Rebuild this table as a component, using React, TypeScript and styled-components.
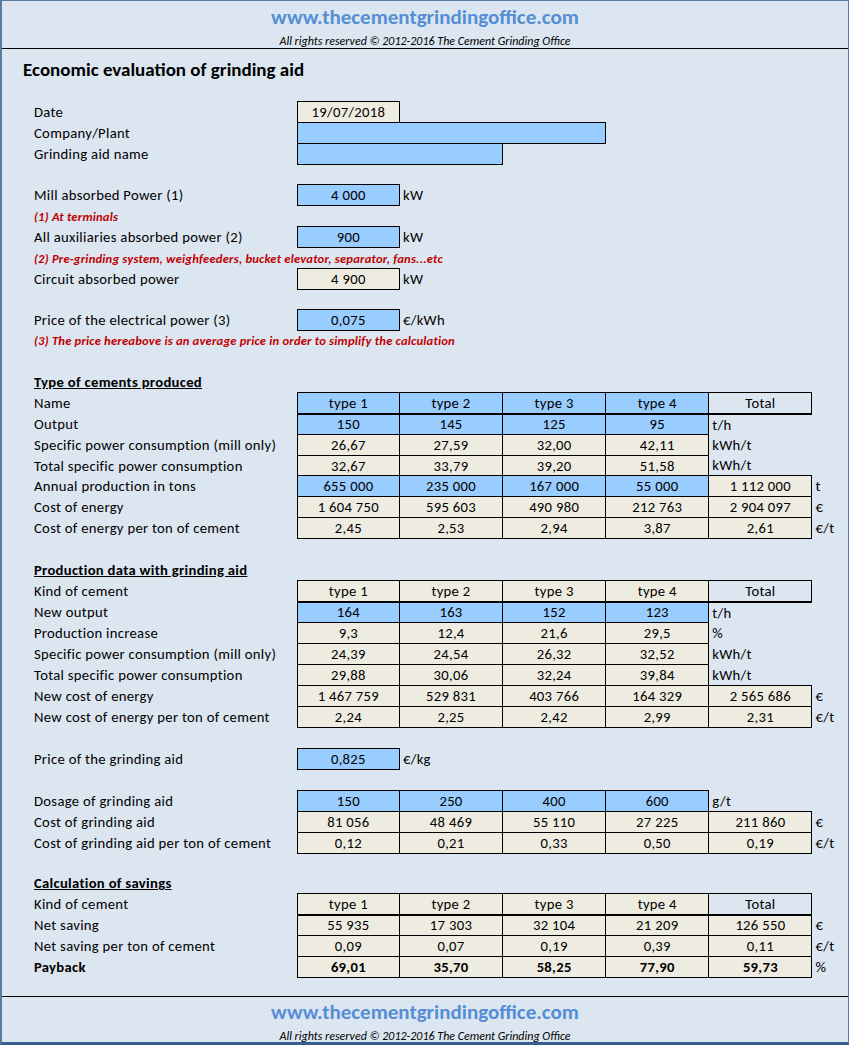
import React from "react";
import styled, { createGlobalStyle, css } from "styled-components";

const FONT = `Carlito, Calibri, Lato, "Liberation Sans", sans-serif`;

const GlobalStyle = createGlobalStyle`
  html, body { margin: 0; padding: 0; background: #dce6f1; }
  body { font-family: ${FONT}; color: #000; }
`;

const Frame = styled.div`
  box-sizing: border-box;
  width: 849px;
  height: 1045px;
  background: #dce6f1;
  border-top: 1px solid #5b7ba3;
  border-left: 2px solid #5b7ba3;
  border-right: 1px solid #5b7ba3;
  border-bottom: 3px solid #376091;
  display: flex;
  flex-direction: column;
`;

const Banner = styled.div<{ $top?: boolean }>`
  box-sizing: border-box;
  height: ${(p) => (p.$top ? "48px" : "46px")};
  display: flex;
  flex-direction: column;
  align-items: center;
  padding-top: ${(p) => (p.$top ? "3px" : "2px")};
  ${(p) =>
    p.$top
      ? css`border-bottom: 1px solid #000;`
      : css`border-top: 1px solid #000; margin-top: auto;`}
`;

const SiteLink = styled.div`
  font-size: 21px;
  line-height: 26px;
  font-weight: 700;
  color: #558ed5;
`;

const Copyright = styled.div`
  margin-top: 4px;
  font-size: 12px;
  line-height: 14px;
  font-style: italic;
  color: #000;
`;

const Title = styled.h1`
  margin: 9px 0 0 21px;
  font-size: 19px;
  line-height: 24px;
  font-weight: 700;
`;

const Sheet = styled.table`
  margin: 19px 0 0 30px;
  border-collapse: collapse;
  table-layout: fixed;
  font-size: 14.67px;
  letter-spacing: 0.3px;
`;

const Row = styled.tr<{ $h: number }>`
  height: ${(p) => p.$h}px;
`;

const Label = styled.td<{ $bold?: boolean }>`
  padding: 0 0 0 2px;
  white-space: nowrap;
  font-weight: ${(p) => (p.$bold ? 700 : 400)};
`;

const FILLS: Record<string, string> = {
  blue: "#99ccff",
  tan: "#eeece1",
  pale: "#dce6f1",
};

const Value = styled.td<{ $fill: string; $bold?: boolean; $thick?: boolean }>`
  padding: 0;
  text-align: center;
  white-space: nowrap;
  background: ${(p) => FILLS[p.$fill]};
  border: 1px solid #000;
  ${(p) => p.$thick && css`border-bottom: 2px solid #000;`}
  font-weight: ${(p) => (p.$bold ? 700 : 400)};
`;

const Unit = styled.td`
  padding: 0 0 0 3px;
  white-space: nowrap;
`;

const Note = styled.td`
  padding: 0 0 0 2px;
  white-space: nowrap;
  color: #c00000;
  font-weight: 700;
  font-style: italic;
  font-size: 12.6px;
  letter-spacing: 0.2px;
`;

const Heading = styled.td`
  padding: 0 0 0 2px;
  white-space: nowrap;
  font-weight: 700;
  text-decoration: underline;
`;

type Cell = { v?: string; fill: "blue" | "tan" | "pale"; span?: number };
type Spec =
  | { kind: "blank"; h?: number }
  | { kind: "heading"; text: string; h?: number }
  | { kind: "note"; text: string; h?: number }
  | {
      kind: "data";
      label: string;
      cells: Cell[];
      unit?: string;
      header?: boolean;
      bold?: boolean;
      h?: number;
    };

const tan = (...vals: string[]): Cell[] => vals.map((v) => ({ v, fill: "tan" }));
const blue = (...vals: string[]): Cell[] => vals.map((v) => ({ v, fill: "blue" }));
const types = ["type 1", "type 2", "type 3", "type 4"];

const rows: Spec[] = [
  { kind: "data", label: "Date", cells: tan("19/07/2018") },
  { kind: "data", label: "Company/Plant", cells: [{ v: "", fill: "blue", span: 3 }] },
  { kind: "data", label: "Grinding aid name", cells: [{ v: "", fill: "blue", span: 2 }] },
  { kind: "blank", h: 20 },
  { kind: "data", label: "Mill absorbed Power (1)", cells: blue("4 000"), unit: "kW" },
  { kind: "note", text: "(1) At terminals" },
  { kind: "data", label: "All auxiliaries absorbed power (2)", cells: blue("900"), unit: "kW" },
  {
    kind: "note",
    text: "(2) Pre-grinding system, weighfeeders, bucket elevator, separator, fans...etc",
  },
  { kind: "data", label: "Circuit absorbed power", cells: tan("4 900"), unit: "kW" },
  { kind: "blank", h: 20 },
  { kind: "data", label: "Price of the electrical power (3)", cells: blue("0,075"), unit: "€/kWh" },
  {
    kind: "note",
    h: 20,
    text: "(3) The price hereabove is an average price in order to simplify the calculation",
  },
  { kind: "blank" },
  { kind: "heading", text: "Type of cements produced" },
  {
    kind: "data",
    label: "Name",
    header: true,
    cells: [...blue(...types), { v: "Total", fill: "pale" }],
  },
  { kind: "data", label: "Output", cells: blue("150", "145", "125", "95"), unit: "t/h" },
  {
    kind: "data",
    label: "Specific power consumption (mill only)",
    cells: tan("26,67", "27,59", "32,00", "42,11"),
    unit: "kWh/t",
  },
  {
    kind: "data",
    label: "Total specific power consumption",
    h: 20,
    cells: tan("32,67", "33,79", "39,20", "51,58"),
    unit: "kWh/t",
  },
  {
    kind: "data",
    label: "Annual production in tons",
    cells: [...blue("655 000", "235 000", "167 000", "55 000"), ...tan("1 112 000")],
    unit: "t",
  },
  {
    kind: "data",
    label: "Cost of energy",
    cells: tan("1 604 750", "595 603", "490 980", "212 763", "2 904 097"),
    unit: "€",
  },
  {
    kind: "data",
    label: "Cost of energy per ton of cement",
    cells: tan("2,45", "2,53", "2,94", "3,87", "2,61"),
    unit: "€/t",
  },
  { kind: "blank" },
  { kind: "heading", text: "Production data with grinding aid" },
  {
    kind: "data",
    label: "Kind of cement",
    header: true,
    cells: [...tan(...types), { v: "Total", fill: "pale" }],
  },
  { kind: "data", label: "New output", cells: blue("164", "163", "152", "123"), unit: "t/h" },
  {
    kind: "data",
    label: "Production increase",
    cells: tan("9,3", "12,4", "21,6", "29,5"),
    unit: "%",
  },
  {
    kind: "data",
    label: "Specific power consumption (mill only)",
    cells: tan("24,39", "24,54", "26,32", "32,52"),
    unit: "kWh/t",
  },
  {
    kind: "data",
    label: "Total specific power consumption",
    cells: tan("29,88", "30,06", "32,24", "39,84"),
    unit: "kWh/t",
  },
  {
    kind: "data",
    label: "New cost of energy",
    cells: tan("1 467 759", "529 831", "403 766", "164 329", "2 565 686"),
    unit: "€",
  },
  {
    kind: "data",
    label: "New cost of energy per ton of cement",
    cells: tan("2,24", "2,25", "2,42", "2,99", "2,31"),
    unit: "€/t",
  },
  { kind: "blank" },
  { kind: "data", label: "Price of the grinding aid", cells: blue("0,825"), unit: "€/kg" },
  { kind: "blank" },
  {
    kind: "data",
    label: "Dosage of grinding aid",
    cells: blue("150", "250", "400", "600"),
    unit: "g/t",
  },
  {
    kind: "data",
    label: "Cost of grinding aid",
    cells: tan("81 056", "48 469", "55 110", "27 225", "211 860"),
    unit: "€",
  },
  {
    kind: "data",
    label: "Cost of grinding aid per ton of cement",
    cells: tan("0,12", "0,21", "0,33", "0,50", "0,19"),
    unit: "€/t",
  },
  { kind: "blank", h: 20 },
  { kind: "heading", text: "Calculation of savings", h: 20 },
  {
    kind: "data",
    label: "Kind of cement",
    header: true,
    cells: [...tan(...types), { v: "Total", fill: "pale" }],
  },
  {
    kind: "data",
    label: "Net saving",
    cells: tan("55 935", "17 303", "32 104", "21 209", "126 550"),
    unit: "€",
  },
  {
    kind: "data",
    label: "Net saving per ton of cement",
    cells: tan("0,09", "0,07", "0,19", "0,39", "0,11"),
    unit: "€/t",
  },
  {
    kind: "data",
    label: "Payback",
    bold: true,
    cells: tan("69,01", "35,70", "58,25", "77,90", "59,73"),
    unit: "%",
  },
];

const COLS = 7;
const WIDTHS = [265, 102, 103, 103, 103, 103, 36];

function SheetRow({ spec }: { spec: Spec }) {
  const h = spec.h ?? 21;
  if (spec.kind === "blank") {
    return (
      <Row $h={h}>
        <td colSpan={COLS} />
      </Row>
    );
  }
  if (spec.kind === "heading") {
    return (
      <Row $h={h}>
        <Heading colSpan={COLS}>{spec.text}</Heading>
      </Row>
    );
  }
  if (spec.kind === "note") {
    return (
      <Row $h={h}>
        <Note colSpan={COLS}>{spec.text}</Note>
      </Row>
    );
  }
  const used = spec.cells.reduce((n, c) => n + (c.span ?? 1), 0);
  const rest = 6 - used - 1;
  return (
    <Row $h={h}>
      <Label $bold={spec.bold}>{spec.label}</Label>
      {spec.cells.map((c, i) => (
        <Value
          key={i}
          colSpan={c.span ?? 1}
          $fill={c.fill}
          $bold={spec.bold}
          $thick={spec.header}
        >
          {c.v}
        </Value>
      ))}
      <Unit>{spec.unit ?? ""}</Unit>
      {rest > 0 && <td colSpan={rest} />}
    </Row>
  );
}

export default function App() {
  return (
    <>
      <GlobalStyle />
      <Frame>
        <Banner $top>
          <SiteLink>www.thecementgrindingoffice.com</SiteLink>
          <Copyright>All rights reserved © 2012-2016 The Cement Grinding Office</Copyright>
        </Banner>
        <Title>Economic evaluation of grinding aid</Title>
        <Sheet>
          <colgroup>
            {WIDTHS.map((w, i) => (
              <col key={i} width={w} />
            ))}
          </colgroup>
          <tbody>
            {rows.map((r, i) => (
              <SheetRow key={i} spec={r} />
            ))}
          </tbody>
        </Sheet>
        <Banner>
          <SiteLink>www.thecementgrindingoffice.com</SiteLink>
          <Copyright>All rights reserved © 2012-2016 The Cement Grinding Office</Copyright>
        </Banner>
      </Frame>
    </>
  );
}
